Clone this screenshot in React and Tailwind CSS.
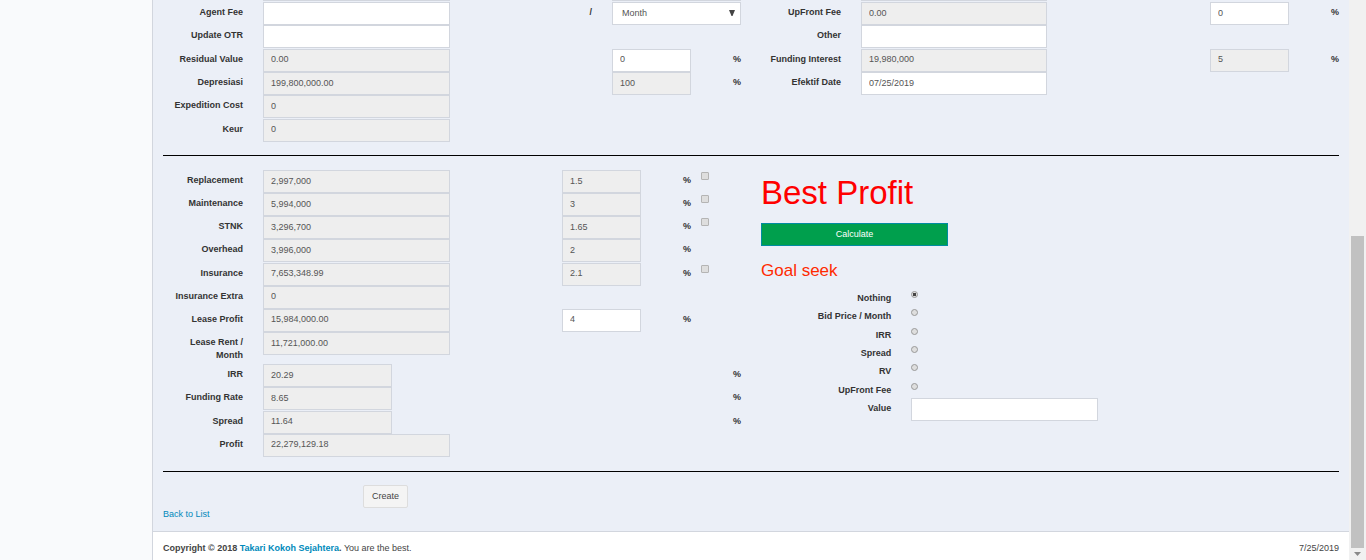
import React from 'react';

const box = 'block h-[23px] min-w-0 border border-[#d2d6de] px-[7px] pb-0.5 text-[9px] leading-[13px] text-[#555] outline-none';
const topCols = 'grid grid-cols-[100fr_207fr_142fr_149fr_100fr_206fr_143fr_149fr]';
const leftCols = 'grid grid-cols-[100fr_207fr_92fr_99fr_50fr_50fr]';
const goalCols = 'grid grid-cols-[150fr_206fr_241fr]';

function Field({ id, value, editable, className = 'w-full', label }) {
  return (
    <input
      id={id}
      type="text"
      aria-label={label}
      defaultValue={value}
      readOnly={!editable}
      className={`${box} ${editable ? 'bg-white' : 'bg-[#eee]'} ${className}`}
    />
  );
}

function Label({ htmlFor, children }) {
  return (
    <label htmlFor={htmlFor} className="block px-2.5 pt-1 text-right font-bold">
      {children}
    </label>
  );
}

function Percent() {
  return <span className="pt-1 font-bold">%</span>;
}

function RateCell({ label, value, editable }) {
  return (
    <div className="flex justify-between px-2.5">
      <Field label={label} value={value} editable={editable} className="w-[79px]" />
      <Percent />
    </div>
  );
}

const topRows = [
  { label: 'Agent Fee', value: '', editable: true, period: true, right: { label: 'UpFront Fee', value: '0.00' }, rightRate: { value: '0', editable: true } },
  { label: 'Update OTR', value: '', editable: true, right: { label: 'Other', value: '', editable: true } },
  { label: 'Residual Value', value: '0.00', rate: { value: '0', editable: true }, right: { label: 'Funding Interest', value: '19,980,000' }, rightRate: { value: '5' } },
  { label: 'Depresiasi', value: '199,800,000.00', rate: { value: '100' }, right: { label: 'Efektif Date', value: '07/25/2019', editable: true } },
  { label: 'Expedition Cost', value: '0' },
  { label: 'Keur', value: '0' },
];

const costRows = [
  { label: 'Replacement', value: '2,997,000', rate: '1.5', check: true },
  { label: 'Maintenance', value: '5,994,000', rate: '3', check: true },
  { label: 'STNK', value: '3,296,700', rate: '1.65', check: true },
  { label: 'Overhead', value: '3,996,000', rate: '2' },
  { label: 'Insurance', value: '7,653,348.99', rate: '2.1', check: true },
  { label: 'Insurance Extra', value: '0' },
  { label: 'Lease Profit', value: '15,984,000.00', rate: '4', editableRate: true },
];

const resultRows = [
  { label: 'IRR', value: '20.29', percent: true },
  { label: 'Funding Rate', value: '8.65', percent: true },
  { label: 'Spread', value: '11.64', percent: true },
  { label: 'Profit', value: '22,279,129.18' },
];

const goals = ['Nothing', 'Bid Price / Month', 'IRR', 'Spread', 'RV', 'UpFront Fee'];

function TopRow({ row, index }) {
  const id = `top-${index}`;
  return (
    <div className={topCols}>
      <Label htmlFor={id}>{row.label}</Label>
      <div className="px-2.5">
        <Field id={id} value={row.value} editable={row.editable} />
      </div>
      <div className="pt-1 pr-2.5 text-right font-bold">{row.period ? '/' : null}</div>
      {row.period ? (
        <div className="relative px-2.5">
          <select aria-label="Period" defaultValue="Month" className="block h-[23px] w-full appearance-none border border-[#d2d6de] bg-white pl-[9px] text-[9px] leading-[13px] text-[#555]">
            <option>Month</option>
            <option>Year</option>
          </select>
          <svg className="pointer-events-none absolute top-2 right-4 h-1.5 w-1.5" viewBox="0 0 6 6" aria-hidden="true">
            <path d="M0 0h6L3.5 6h-1z" fill="#444" />
          </svg>
        </div>
      ) : row.rate ? (
        <RateCell label={`${row.label} rate`} {...row.rate} />
      ) : (
        <div />
      )}
      {row.right && (
        <>
          <Label htmlFor={`${id}-right`}>{row.right.label}</Label>
          <div className="px-2.5">
            <Field id={`${id}-right`} value={row.right.value} editable={row.right.editable} />
          </div>
          <div />
          {row.rightRate && <RateCell label={`${row.right.label} rate`} {...row.rightRate} />}
        </>
      )}
    </div>
  );
}

function CostRow({ row, index }) {
  const id = `cost-${index}`;
  return (
    <div className={leftCols}>
      <Label htmlFor={id}>{row.label}</Label>
      <div className="px-2.5">
        <Field id={id} value={row.value} />
      </div>
      <div />
      <div className="px-2.5">
        {row.rate && <Field label={`${row.label} rate`} value={row.rate} editable={row.editableRate} />}
      </div>
      <div className="flex justify-end pr-2.5">{row.rate && <Percent />}</div>
      <div className="pt-0.5">
        {row.check && (
          <input
            type="checkbox"
            aria-label={`Include ${row.label}`}
            className="block size-2 appearance-none rounded-[1px] border border-[#b4b4b4] bg-[#dedede] checked:bg-[#555]"
          />
        )}
      </div>
    </div>
  );
}

function ResultRow({ row, index }) {
  const id = `result-${index}`;
  return (
    <div className={leftCols}>
      <Label htmlFor={id}>{row.label}</Label>
      <div className="px-2.5">
        <Field id={id} value={row.value} className={row.percent ? 'w-[129px]' : 'w-full'} />
      </div>
      <div className="col-span-4 flex justify-end pr-2.5">{row.percent && <Percent />}</div>
    </div>
  );
}

function GoalSeek() {
  return (
    <div className="pt-[3px]">
      <h1 className="px-2.5 text-[33px] leading-[40px] text-[#f00]">Best Profit</h1>
      <div className="pt-2.5 pl-2.5">
        <button type="button" className="block h-[23px] w-[187px] border border-[#008ca0] bg-[#009f4d] text-center text-[9px] leading-[13px] text-white">
          Calculate
        </button>
      </div>
      <h2 className="px-2.5 pt-[15px] text-[17px] leading-[20px] text-[#ff2a00]">Goal seek</h2>
      <div className="mt-[7px] grid min-h-[110px] auto-rows-fr">
        {goals.map((goal, i) => (
          <div key={goal} className={goalCols}>
            <Label htmlFor={`goal-${i}`}>{goal}</Label>
            <div className="px-2.5 pt-[3px]">
              <input
                id={`goal-${i}`}
                type="radio"
                name="goal"
                defaultChecked={i === 0}
                className="block size-[7px] appearance-none rounded-full border border-[#999] bg-[#dedede] checked:bg-[radial-gradient(circle,#444_40%,#dedede_50%)]"
              />
            </div>
          </div>
        ))}
      </div>
      <div className={goalCols}>
        <Label htmlFor="goal-value">Value</Label>
        <div className="px-2.5">
          <Field id="goal-value" value="" editable />
        </div>
      </div>
    </div>
  );
}

export default function App() {
  return (
    <div className="flex min-h-screen bg-[#f9fafc] font-['Liberation_Sans',Arial,sans-serif] text-[9px] leading-[13px] text-[#333]">
      <aside className="w-[152px] shrink-0" />
      <div className="flex min-w-0 flex-1 flex-col border-l border-[#d2d6de] bg-[#ebeff7]">
        <main className="flex-1 pb-2.5">
          <form onSubmit={(e) => e.preventDefault()}>
            <div className={topCols}>
              <div />
              <div className="px-2.5"><div className="h-px bg-[#d2d6de]" /></div>
              <div />
              <div className="px-2.5"><div className="h-px bg-[#d2d6de]" /></div>
              <div />
              <div className="px-2.5"><div className="h-px bg-[#d2d6de]" /></div>
            </div>
            <div className="mt-px grid min-h-[140px] auto-rows-fr">
              {topRows.map((row, i) => (
                <TopRow key={row.label} row={row} index={i} />
              ))}
            </div>
            <hr className="mx-2.5 mt-[13px] mb-[14px] border-t border-black" />
            <div className="grid grid-cols-2">
              <div>
                <div className="grid min-h-[162px] auto-rows-fr">
                  {costRows.map((row, i) => (
                    <CostRow key={row.label} row={row} index={i} />
                  ))}
                </div>
                <div className={`${leftCols} min-h-8`}>
                  <Label htmlFor="lease-rent">Lease Rent / Month</Label>
                  <div className="px-2.5">
                    <Field id="lease-rent" value="11,721,000.00" />
                  </div>
                </div>
                <div className="grid min-h-[93px] auto-rows-fr">
                  {resultRows.map((row, i) => (
                    <ResultRow key={row.label} row={row} index={i} />
                  ))}
                </div>
              </div>
              <GoalSeek />
            </div>
            <hr className="mx-2.5 mt-[14px] mb-[13px] border-t border-black" />
            <div className="pl-[210px]">
              <button type="submit" className="block h-[23px] rounded-xs border border-[#ddd] bg-[#f4f4f4] px-2 text-[#444]">
                Create
              </button>
            </div>
          </form>
          <div className="px-2.5">
            <a href="#list" className="text-[#0089bb]">Back to List</a>
          </div>
        </main>
        <footer className="flex justify-between border-t border-[#d2d6de] bg-white px-2.5 pt-2.5 pb-[5px] text-[#444]">
          <p>
            <strong>
              Copyright © 2018 <a href="#company" className="text-[#0089bb]">Takari Kokoh Sejahtera</a>.
            </strong>{' '}
            You are the best.
          </p>
          <span>7/25/2019</span>
        </footer>
      </div>
      <div className="flex w-[17px] shrink-0 flex-col bg-[#f1f1f1] px-0.5" aria-hidden="true">
        <div className="flex-[236]" />
        <div className="flex-[312] bg-[#c1c1c1]" />
        <div className="flex h-3 items-center justify-center">
          <svg width="7" height="4" viewBox="0 0 7 4">
            <path d="M0 0h7L3.5 4z" fill="#8a8a8a" />
          </svg>
        </div>
      </div>
    </div>
  );
}
